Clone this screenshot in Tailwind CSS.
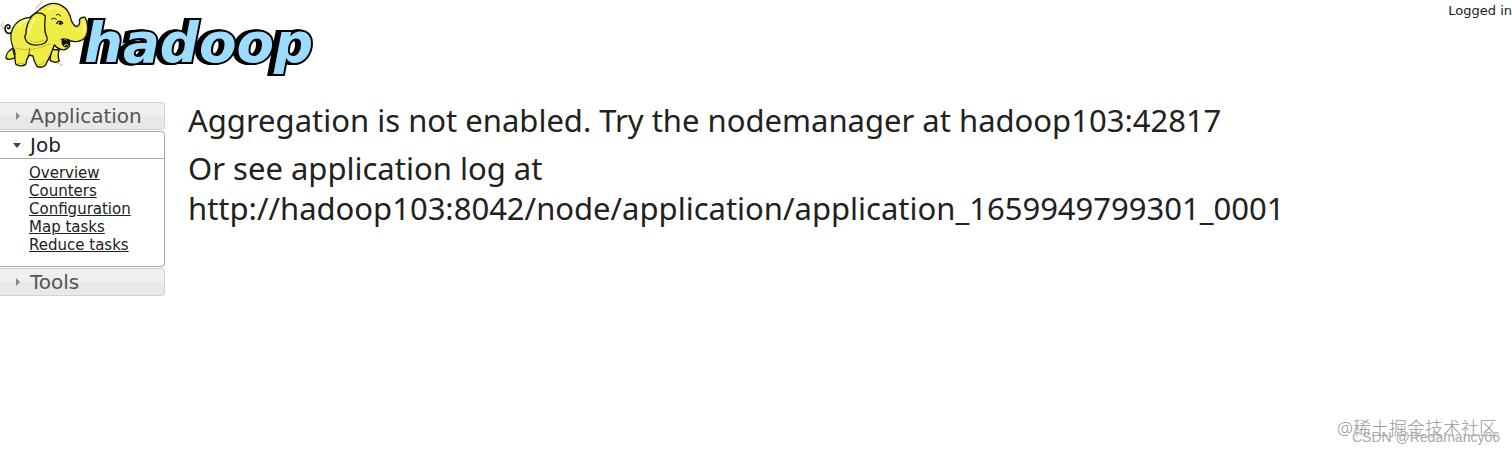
<!DOCTYPE html>
<html lang="en">
<head>
<meta charset="utf-8">
<meta name="viewport" content="width=device-width, initial-scale=1">
<title>Hadoop JobHistory</title>
<script src="https://cdn.jsdelivr.net/npm/@tailwindcss/browser@4"></script>
</head>
<body class="relative min-h-screen overflow-x-hidden bg-white font-['DejaVu_Sans',sans-serif] text-[#212121]">
<header class="flex items-start justify-between">
  <svg class="h-20 w-80 shrink-0" viewBox="0 0 960 240" role="img" aria-label="hadoop">
    <text class="font-['DejaVu_Sans',sans-serif] [filter:drop-shadow(-6px_0_0_#000)_drop-shadow(-6px_0_0_#000)]" x="252" y="186" font-size="164" font-weight="700" font-style="italic" fill="#9bdcff" stroke="#000" stroke-width="12" paint-order="stroke">hadoop</text>
    <g stroke="#15150a" stroke-width="4" stroke-linecap="round" stroke-linejoin="round" fill="#f0ed48">
      <path d="M33 98C22 105 14 94 15 84C17 73 29 71 30 80C30 86 25 88 23 83" fill="none" stroke-width="5"/>
      <path d="M38 145C27 150 18 162 18 174C24 181 35 178 45 173Z"/>
      <path d="M154 148L178 150C172 162 174 172 178 183C169 189 156 187 150 181Z"/>
      <path d="M90 52C66 53 46 67 37 88C29 107 34 133 43 151C45 166 44 182 47 192C56 200 70 198 77 193C78 183 82 173 88 165L99 168C100 179 106 190 111 199C122 205 136 200 139 190C145 178 151 169 155 156L163 135C169 142 178 148 187 149C195 151 205 145 209 138C210 129 206 122 200 118C222 130 249 125 258 108C266 91 264 66 255 52C248 51 241 54 238 60C241 71 235 79 229 80C222 78 218 70 214 62C211 42 200 25 184 16C163 5 140 12 122 26C111 35 101 42 90 52Z"/>
      <path d="M136 48C124 35 107 36 97 47C86 61 78 83 78 101C72 110 76 120 82 127C92 137 115 137 128 132C141 127 146 116 138 105C132 89 133 75 136 48Z"/>
      <path d="M188 117C194 124 201 124 208 125C210 135 203 142 195 140C187 137 184 126 188 117Z" fill="#11110b"/>
      <path d="M193 136Q199 128 205 136" fill="none" stroke="#f3f04a" stroke-width="3"/>
      <path d="M170 70C174 62 184 60 188 70" fill="none" stroke-width="4"/>
      <path d="M177 70Q181 61 185 70V73H178Z" fill="#11110b" stroke-width="2"/>
      <path d="M169 45Q178 39 181 48M155 57Q166 51 169 59M183 118Q196 113 208 120" fill="none" stroke-width="3"/>
      <path d="M89 145Q89 158 84 169M44 150Q43 157 46 164" fill="none" stroke-width="2"/>
      <path d="M107 27Q111 15 124 10M115 31Q118 22 126 20M3 79Q4 72 9 69M7 87L10 77M172 192L181 188M179 197L188 192" fill="none" stroke="#888" stroke-width="2"/>
    </g>
    <path d="M57 77Q68 63 86 59M145 28Q165 15 182 29M85 99Q93 72 104 58M250 66Q256 82 251 98" fill="none" stroke="#fffbb5" stroke-width="6" stroke-linecap="round" opacity=".65"/>
    <path d="M50 145Q91 157 150 132M114 194Q130 195 132 183M54 190L70 190M92 123Q112 132 130 120" fill="none" stroke="#aaa525" stroke-width="4" stroke-linecap="round" opacity=".55"/>
  </svg>
  <p class="pt-[3px] text-[13px] leading-4">Logged in</p>
</header>

<div class="flex items-start gap-[23px] pt-5">
  <nav class="w-[165px] shrink-0 pt-0.5" aria-label="Main navigation">
    <button type="button" class="flex h-7 w-full items-center gap-2 rounded-r border border-l-0 border-[#d3d3d3] bg-linear-to-b from-[#efefef] from-50% to-[#e8e8e8] to-50% pl-[15px] text-xl text-[#555]">
      <svg class="h-2 w-[7px]" viewBox="0 0 7 8" aria-hidden="true"><path d="M1 0L5 4L1 8Z" fill="#888"/></svg>Application
    </button>
    <button type="button" aria-expanded="true" class="mt-px flex h-7 w-full items-center rounded-tr border border-l-0 border-[#aaa] bg-white pl-3 text-xl">
      <svg class="mr-2 h-[5px] w-[10px]" viewBox="0 0 10 5" aria-hidden="true"><path d="M1 0H9L5 5Z" fill="#454545"/></svg>Job
    </button>
    <ul class="rounded-br border border-l-0 border-t-0 border-[#aaa] pt-[5px] pr-2 pb-3 pl-[29px] text-[15px] leading-[18px]">
      <li><a class="underline" href="#overview">Overview</a></li>
      <li><a class="underline" href="#counters">Counters</a></li>
      <li><a class="underline" href="#configuration">Configuration</a></li>
      <li><a class="underline" href="#map">Map tasks</a></li>
      <li><a class="underline" href="#reduce">Reduce tasks</a></li>
    </ul>
    <button type="button" class="mt-px flex h-7 w-full items-center gap-2 rounded-r border border-l-0 border-[#d3d3d3] bg-linear-to-b from-[#efefef] from-50% to-[#e8e8e8] to-50% pl-[15px] text-xl text-[#555]">
      <svg class="h-2 w-[7px]" viewBox="0 0 7 8" aria-hidden="true"><path d="M1 0L5 4L1 8Z" fill="#888"/></svg>Tools
    </button>
  </nav>
  <main class="min-w-0 flex-1 font-['Noto_Sans',sans-serif] text-[31px] leading-10">
    <p>Aggregation is not enabled. Try the nodemanager at hadoop103:42817</p>
    <p class="mt-2">Or see application log at<br>http://hadoop103:8042/node/application/application_1659949799301_0001</p>
  </main>
</div>

<p class="absolute right-[15px] bottom-[11px] font-['Noto_Sans','Noto_Sans_CJK_SC',sans-serif] text-lg leading-7 font-light text-[#999]">@稀土掘金技术社区</p>
<p class="absolute right-3 bottom-2 font-['Liberation_Sans',sans-serif] text-sm leading-4 text-[#aaa]">CSDN @Redamancy06</p>
</body>
</html>
